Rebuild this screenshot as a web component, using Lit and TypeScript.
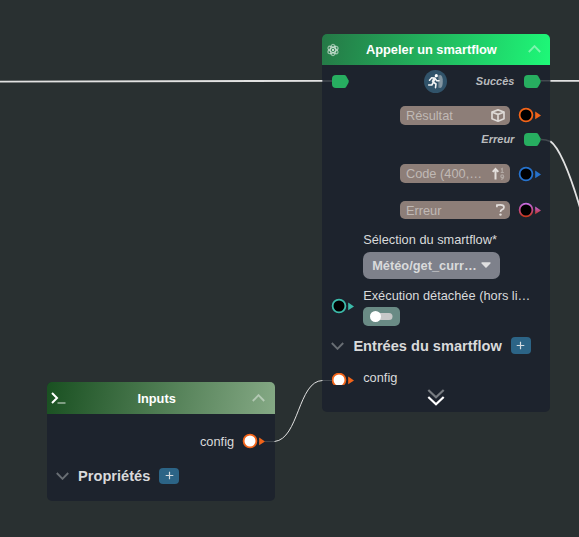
import { LitElement, html, css, svg, nothing } from "lit";
import { customElement, property } from "lit/decorators.js";

const chevron = (dir: "up" | "down") => svg`<svg class="chev" width="13" height="8" viewBox="0 0 13 8" fill="none" stroke="currentColor" stroke-width="1.9"><path d=${dir === "up" ? "M.8 7 6.5 1.2 12.2 7" : "M.8 1 6.5 6.8 12.2 1"}/></svg>`;

@customElement("flow-port")
class FlowPort extends LitElement {
  @property() kind = "data";
  @property() color = "#f26419";
  @property() fill = "#000";
  static styles = css`
    :host { display: block; line-height: 0; }
    svg { display: block; overflow: visible; }
  `;
  render() {
    if (this.kind === "exec")
      return html`<svg width="17" height="13" viewBox="0 0 17 13"><path fill="#27ae60" d="M4 0H12.3Q13.5 0 14.1 1L16.5 5.3Q17 6.5 16.5 7.7L14.1 12Q13.5 13 12.3 13H4Q0 13 0 9V4Q0 0 4 0Z"/></svg>`;
    const mixed = this.color === "mixed";
    const paint = mixed ? "url(#mix)" : this.color;
    return html`<svg width="22" height="14" viewBox="0 0 22 14">
      ${mixed ? svg`<defs><linearGradient id="mix" x1="0" y1="0" x2="0" y2="1"><stop offset="0" stop-color="#c56be0"/><stop offset=".5" stop-color="#bf4a86"/><stop offset="1" stop-color="#c9391d"/></linearGradient></defs>` : nothing}
      <circle cx="7" cy="7" r="6.4" fill=${this.fill} stroke=${paint} stroke-width="1.8"/>
      <path d="M16.2 3.6 22 7.4 16.2 11.2Z" fill=${paint}/></svg>`;
  }
}

@customElement("flow-node")
class FlowNode extends LitElement {
  @property() heading = "";
  @property() tone = "call";
  static styles = css`
    :host { display: flex; flex-direction: column; border-radius: 5px; overflow: hidden; background: #1d232d; }
    header { display: grid; grid-template-columns: 22px 1fr 22px; align-items: center; height: 31.5px; flex: none; box-sizing: border-box; color: #fff; font-weight: bold; font-size: 12.8px; text-align: center; }
    .call { background: linear-gradient(100deg, #257846, #1ef878); }
    .inputs { background: linear-gradient(100deg, #195021, #85a985); }
    .title { padding-right: 8px; }
    .call .title { padding-right: 10px; }
    .chev { color: rgba(255, 255, 255, .42); margin: -1px 0 0 -.5px; }
    .body { flex: 1; display: flex; flex-direction: column; }
    .icon { display: block; }
  `;
  render() {
    return html`<header class=${this.tone}>
        ${this.tone === "call"
          ? html`<svg class="icon" width="22" height="14" viewBox="0 0 22 14"><g transform="translate(11 7)" fill="none" stroke="#fff" stroke-opacity=".5" stroke-width="1.3"><ellipse rx="2.5" ry="5.6"/><ellipse rx="2.5" ry="5.6" transform="rotate(60)"/><ellipse rx="2.5" ry="5.6" transform="rotate(120)"/><circle r="1" fill="#fff" stroke="none"/></g></svg>`
          : html`<svg class="icon" width="22" height="14" viewBox="0 0 22 14"><path d="M5 2 10 7 5 12" fill="none" stroke="#fff" stroke-width="2"/><path d="M10.5 12H18.5" stroke="#fff" stroke-opacity=".42" stroke-width="1.8"/></svg>`}
        <span class="title">${this.heading}</span>${chevron("up")}
      </header>
      <div class="body"><slot></slot></div>`;
  }
}

@customElement("app-root")
class AppRoot extends LitElement {
  static styles = css`
    :host { display: block; position: relative; width: 579px; height: 537px; overflow: hidden; background: #293031; font-family: "Liberation Sans", Arial, sans-serif; font-size: 12.8px; line-height: 15px; color: #d9dadb; }
    .wires { position: absolute; inset: 0; pointer-events: none; }
    .wires path { fill: none; stroke: #e2e2e2; }
    .wires .faint { stroke: #434950; }
    .node-call { position: absolute; left: 322.4px; top: 33.8px; width: 228px; height: 378px; }
    .node-inputs { position: absolute; left: 46.6px; top: 382.4px; width: 228px; height: 118.5px; }
    .row { display: flex; align-items: center; flex: none; }
    .out { justify-content: flex-end; padding-right: 9.5px; }
    .exec { height: 31px; padding: 0 9.5px; }
    .main { height: 32.4px; }
    .exec flow-port:last-child { margin-left: 9.5px; }
    .em { font: italic bold 11px/15px "Liberation Sans", Arial, sans-serif; color: #b9bbbd; }
    .badge { display: block; margin-left: 75.5px; }
    .exec .em { margin-left: auto; }
    .field { display: flex; align-items: center; justify-content: space-between; box-sizing: border-box; width: 110px; height: 18.5px; padding: 0 5px 0 6px; border-radius: 5px; background: #8d7e78; color: #c0b9b5; margin-right: 9px; }
    .label { padding-left: 40.8px; margin-top: 13px; }
    .select { display: flex; align-items: center; box-sizing: border-box; width: 137px; height: 27px; margin: 4.5px 0 0 40.8px; padding: 0 9px; border-radius: 7px; background: #7e818b; color: #d9dadb; font-weight: bold; justify-content: space-between; }
    .option { margin-top: 9px; padding-left: 9.3px; }
    .option flow-port { margin-top: -1px; }
    .option-text { margin-left: 9.5px; }
    .toggle { width: 37px; height: 18.5px; border-radius: 5px; background: #6a8b85; display: flex; align-items: center; box-sizing: border-box; padding-left: 7px; margin-top: 4.2px; }
    .section { font-size: 14.6px; font-weight: bold; line-height: 18px; padding-left: 9px; margin-top: 11px; }
    .plus { display: flex; align-items: center; justify-content: center; width: 20px; height: 16.5px; border-radius: 4px; background: #2c6486; margin-left: 9px; }
    .chev { color: #696e74; margin: 1px 9px 0 0; }
    .entry { height: 15px; margin-top: 15px; padding-left: 9.3px; gap: 9.5px; }
    .clip { height: 12px; overflow: hidden; margin-top: 3.5px; }
    .more { display: block; margin: 4px auto 0; }
    .r1 { height: 35.2px; } .r2 { height: 13.5px; } .r3 { height: 54.5px; } .r4 { height: 18.5px; }
    .output { margin-top: 20px; justify-content: flex-end; padding-right: 9.5px; gap: 9px; }
    .props { margin-top: 18px; padding-left: 9.5px; }
  `;
  plus() {
    return html`<span class="plus"><svg width="9" height="9" viewBox="0 0 9 9"><path d="M4.5 .7V8.3M.7 4.5H8.3" stroke="#d5dbe0" stroke-width="1.2"/></svg></span>`;
  }
  render() {
    return html`
      <flow-node class="node-call" heading="Appeler un smartflow" tone="call">
        <div class="row exec main">
          <flow-port kind="exec"></flow-port>
          <svg class="badge" width="23" height="23" viewBox="0 0 23 23"><circle cx="11.5" cy="11.5" r="11.5" fill="#31536a"/><path d="M14.5 5.5Q18.8 3.2 18.8 11.5T14.5 17.5Z" fill="#8496a2"/><path d="M14.9 5V18" stroke="#5d7485" stroke-width=".8"/><circle cx="12.3" cy="5.7" r="1.6" fill="#fff"/><path d="M5.5 10.2 7.5 7.9 11 8 9 12 12 14 11.5 17.6M9 12.8 7.8 15H4.7M11 8.5 12.8 10.8H15" fill="none" stroke="#f2f3f4" stroke-width="1.6" stroke-linejoin="round" stroke-linecap="round"/><path d="M10.5 8.2 8.8 12" stroke="#f2f3f4" stroke-width="2.6"/></svg>
          <span class="em">Succès</span><flow-port kind="exec"></flow-port>
        </div>
        <div class="row out r1"><span class="field"><span>Résultat</span><svg width="14" height="13" viewBox="0 0 14 13" fill="none" stroke="#ddd9d6" stroke-width="1.7" stroke-linejoin="round"><path d="M7 .9 13 3V9.7L7 12.2 1 9.7V3ZM1.2 3.3 7 5.4 12.8 3.3M7 5.4V12"/></svg></span><flow-port></flow-port></div>
        <div class="row exec r2"><span class="em">Erreur</span><flow-port kind="exec"></flow-port></div>
        <div class="row out r3"><span class="field"><span>Code (400,…</span><svg width="13" height="14" viewBox="0 0 13 14"><path d="M3.5 12.5V2M.7 4.9 3.5 1.9 6.3 4.9" fill="none" stroke="#e2dedb" stroke-width="2"/><path d="M9 2.2 10.2 1.5V5.5M8.8 5.5H11.8" fill="none" stroke="#b3aaa5" stroke-width="1.2"/><circle cx="10.2" cy="9.2" r="1.4" fill="none" stroke="#b3aaa5" stroke-width="1.2"/><path d="M11.6 9.2Q11.7 11.8 9.2 12.3" fill="none" stroke="#b3aaa5" stroke-width="1.2"/></svg></span><flow-port color="#2672cc"></flow-port></div>
        <div class="row out r4"><span class="field"><span>Erreur</span><svg width="9" height="12" viewBox="0 0 9 12"><path d="M.9 3.2V1.2Q2.5 .9 4.5 .9 8 .9 8 3.3 8 5 6 5.6 4.5 6.2 4.5 8" fill="none" stroke="#e2dedb" stroke-width="1.7"/><circle cx="4.5" cy="10.6" r="1.2" fill="#e2dedb"/></svg></span><flow-port color="mixed"></flow-port></div>
        <div class="row label">Sélection du smartflow*</div>
        <div class="select"><span>Météo/get_curr…</span><svg width="10" height="6" viewBox="0 0 10 6"><path d="M.8 .3H9.2Q10 .7 9.4 1.4L5.6 5.4Q5 6 4.4 5.4L.6 1.4Q0 .7 .8 .3Z" fill="#e0e0e1"/></svg></div>
        <div class="row option"><flow-port color="#3cbbaa"></flow-port><div class="option-text"><div>Exécution détachée (hors li…</div><div class="toggle"><svg width="23" height="11" viewBox="0 0 23 11"><rect x="3" y="2" width="19.5" height="7" rx="3.5" fill="#c8c8c8"/><circle cx="5.5" cy="5.5" r="5.5" fill="#fff"/></svg></div></div></div>
        <div class="row section">${chevron("down")}<span>Entrées du smartflow</span>${this.plus()}</div>
        <div class="row entry"><flow-port class="clip" fill="#fff"></flow-port><span>config</span></div>
        <svg class="more" width="18" height="17" viewBox="0 0 18 17" fill="none" stroke-width="2.2"><path d="M1.3 1 9 8.3 16.7 1" stroke="#777b80"/><path d="M1.3 8 9 15.3 16.7 8" stroke="#fff"/></svg>
      </flow-node>
      <flow-node class="node-inputs" heading="Inputs" tone="inputs">
        <div class="row output"><span>config</span><flow-port fill="#fff"></flow-port></div>
        <div class="row section props">${chevron("down")}<span>Propriétés</span>${this.plus()}</div>
      </flow-node>
      <svg class="wires" width="579" height="537">
        <path class="faint" d="M322.5 81H332M541 80.8H550.5M541 139.5Q546 139.5 550.5 141.5" stroke-width="1.6"/>
        <path class="faint" d="M265 441.6H274.5M322.5 380.5H332" stroke-width="1"/>
        <path d="M0 81.7 322.4 80.8M550.4 80.8H579M550.4 141.3C561 149 571 177 581 211" stroke-width="1.8"/>
        <path d="M274.5 441.5C299 439 298 381 322.5 380.5" stroke-width="1"/>
      </svg>`;
  }
}
